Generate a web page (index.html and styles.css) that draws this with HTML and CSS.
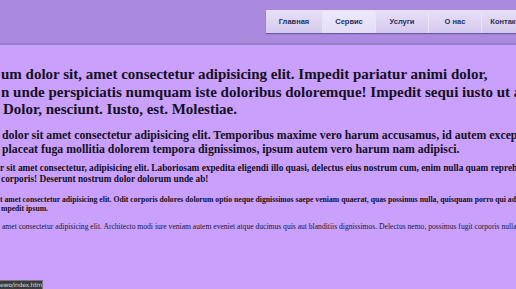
FILE: index.html
```html
<!DOCTYPE html>
<html lang="ru">
<head>
<meta charset="utf-8">
<title>Сервис</title>
<link rel="stylesheet" href="styles.css">
</head>
<body>
<header class="header">
  <nav class="nav">
    <a class="nav-item" href="#">Главная</a>
    <a class="nav-item active" href="#">Сервис</a>
    <a class="nav-item" href="#">Услуги</a>
    <a class="nav-item" href="#">О нас</a>
    <a class="nav-item" href="#">Контакты</a>
  </nav>
</header>
<main class="content">
  <h1 class="t1">um dolor sit, amet consectetur adipisicing elit. Impedit pariatur animi dolor,<br>n unde perspiciatis numquam iste doloribus doloremque! Impedit sequi iusto ut a<br><span class="lead">Dolor, nesciunt. Iusto, est. Molestiae.</span></h1>
  <h2 class="t2"><span class="lead">dolor sit amet consectetur adipisicing elit. Temporibus maxime vero harum accusamus, id autem excepturi</span><br><span class="lead2">placeat fuga mollitia dolorem tempora dignissimos, ipsum autem vero harum nam adipisci.</span></h2>
  <h3 class="t3">r sit amet consectetur, adipisicing elit. Laboriosam expedita eligendi illo quasi, delectus eius nostrum cum, enim nulla quam reprehenderit<br><span class="lead1">corporis! Deserunt nostrum dolor dolorum unde ab!</span></h3>
  <h4 class="t4">t amet consectetur adipisicing elit. Odit corporis dolores dolorum optio neque dignissimos saepe veniam quaerat, quas possimus nulla, quisquam porro qui ad p<br><span class="lead1">mpedit ipsum.</span></h4>
  <p class="t5"><span class="lead">amet consectetur adipisicing elit. Architecto modi iure veniam autem eveniet atque ducimus quis aut blanditiis dignissimos. Delectus nemo, possimus fugit corporis nulla</span></p>
</main>
<div class="status">ewo/index.html</div>
</body>
</html>
```
FILE: styles.css
```css
html, body {
  margin: 0;
  padding: 0;
  height: 100%;
  overflow: hidden;
}
body {
  background: #c9a0fc;
  font-family: "Liberation Serif", "Times New Roman", serif;
  color: #14101c;
}
.header {
  height: 45px;
  background: #a98ade;
  border-bottom: 2px solid #9a7ccd;
  box-sizing: border-box;
  display: flex;
  align-items: flex-start;
  padding: 10px 0 0 266px;
}
.nav {
  display: flex;
  flex-shrink: 0;
  box-shadow: 0 1px 1px rgba(80, 50, 130, 0.6);
}
.nav-item {
  display: flex;
  align-items: center;
  justify-content: center;
  height: 23px;
  width: 53px;
  font-family: "Liberation Sans", Arial, sans-serif;
  font-weight: bold;
  font-size: 7.5px;
  color: #26305c;
  text-decoration: none;
  background: linear-gradient(#e6e0f7, #d5c9ee);
  border-right: 1px solid #e9e4f8;
  box-sizing: border-box;
  flex-shrink: 0;
}
.nav-item:first-child { width: 57px; }
.nav-item.active {
  background: linear-gradient(#eeeafb, #e2dcf6);
}
.content {
  padding-top: 21px;
  white-space: nowrap;
}
.content h1, .content h2, .content h3, .content h4, .content p {
  margin: 0;
  font-weight: bold;
}
.t1 {
  font-size: 15px;
  line-height: 17.5px;
  margin-bottom: 9px !important;
  padding-left: 1px;
}
.lead { padding-left: 2px; }
.lead1 { padding-left: 1px; }
.lead2 { padding-left: 2px; }
.t2 {
  font-size: 11.8px;
  line-height: 14.5px;
  margin-bottom: 6px !important;
}
.t3 {
  font-size: 9.3px;
  line-height: 11.5px;
  margin-bottom: 9px !important;
}
.t4 {
  font-size: 7.7px;
  line-height: 9px;
  margin-bottom: 9px !important;
}
.content p.t5 {
  font-weight: normal;
  font-size: 7.6px;
  line-height: 10px;
  color: #221833;
}
.status {
  position: fixed;
  left: 0;
  bottom: 0;
  width: 43px;
  height: 9px;
  background: #3a3a3a;
  border: 1px solid #777;
  border-left: none;
  border-bottom: none;
  box-sizing: border-box;
  color: #d8d8d8;
  font-family: "DejaVu Sans", sans-serif;
  font-size: 6px;
  line-height: 8px;
  padding-left: 0;
  overflow: hidden;
  white-space: nowrap;
  letter-spacing: -0.2px;
}
```
